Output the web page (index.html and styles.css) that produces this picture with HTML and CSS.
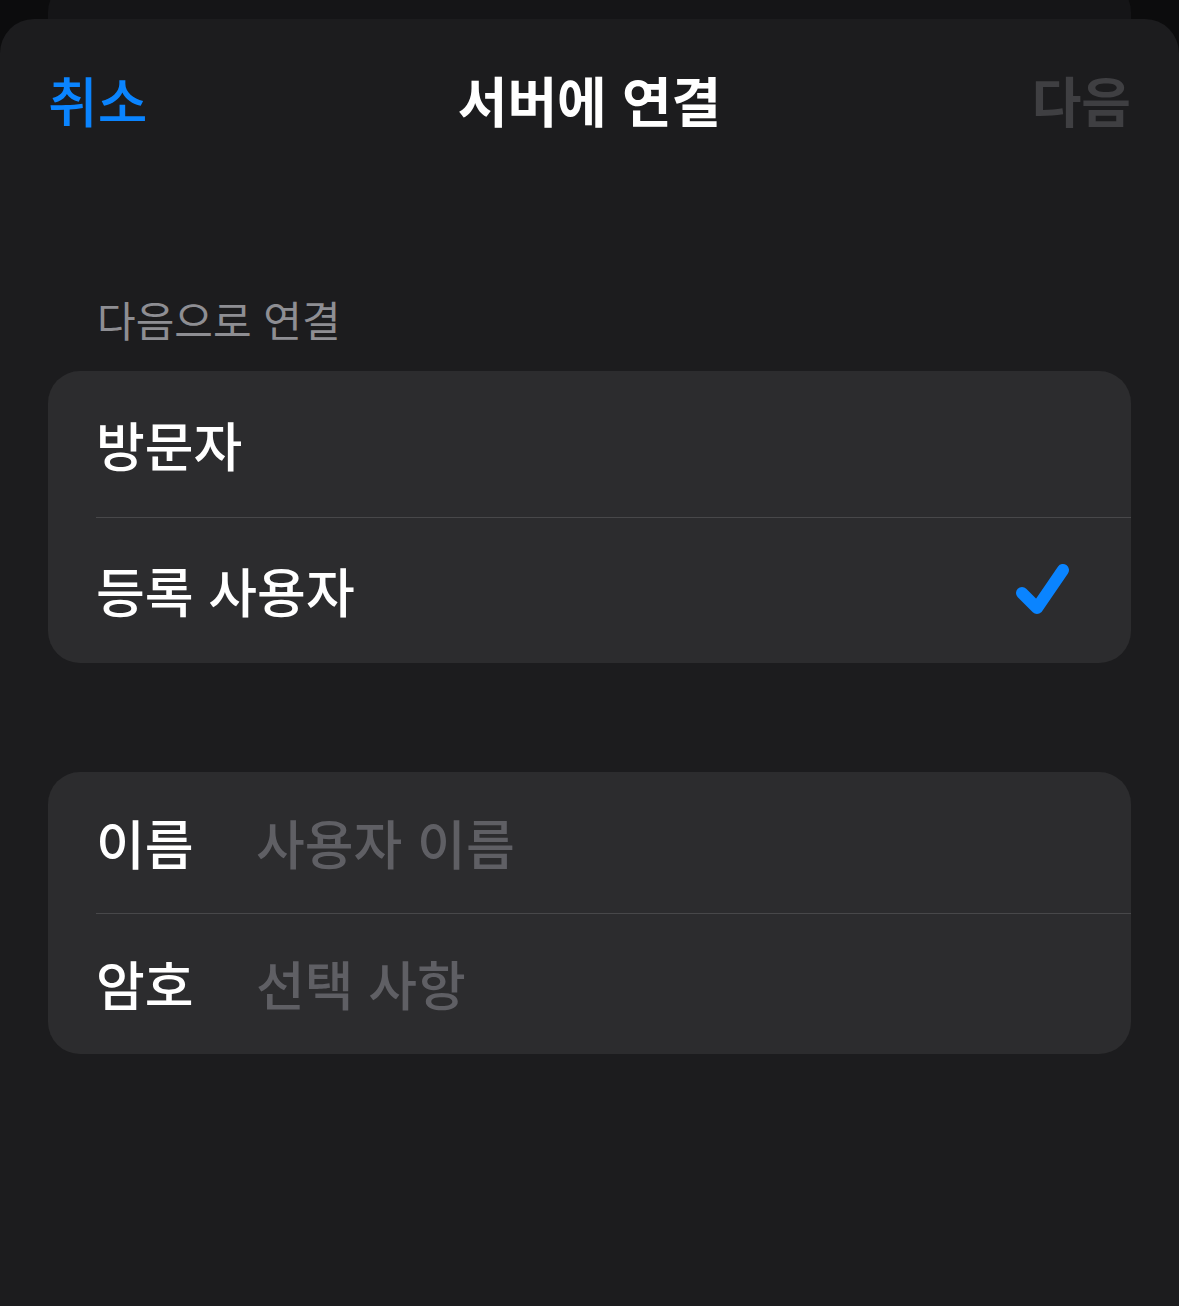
FILE: index.html
```html
<!DOCTYPE html>
<html lang="ko">
<head>
    <meta charset="UTF-8">
    <meta name="viewport" content="width=device-width, initial-scale=1.0">
    <title>서버에 연결</title>
    <link rel="stylesheet" href="styles.css">
</head>
<body>
    <div class="back-sheet"></div>
    <div class="sheet">
        <header class="nav-bar">
            <a href="#" class="nav-cancel">취소</a>
            <h1 class="nav-title">서버에 연결</h1>
            <span class="nav-next">다음</span>
        </header>

        <p class="section-header">다음으로 연결</p>
        <ul class="group">
            <li class="row"><span class="row-label">방문자</span></li>
            <li class="row">
                <span class="row-label">등록 사용자</span>
                <svg class="check" width="56" height="54" viewBox="0 0 56 54">
                    <path d="M7 30 L22 45 L48 7" fill="none" stroke="#0a84ff" stroke-width="12" stroke-linecap="round" stroke-linejoin="round"/>
                </svg>
            </li>
        </ul>

        <ul class="group group-form">
            <li class="row">
                <span class="field-label">이름</span>
                <span class="placeholder">사용자 이름</span>
            </li>
            <li class="row">
                <span class="field-label">암호</span>
                <span class="placeholder">선택 사항</span>
            </li>
        </ul>
    </div>
</body>
</html>
```

FILE: styles.css
```css
:root {
    --fondo: #0c0c0d;
    --hoja: #1c1c1e;
    --hoja-atras: #151517;
    --celda: #2c2c2e;
    --separador: #48484a;
    --azul: #0a84ff;
    --gris: #8e8e93;
    --gris-oscuro: #3f3f42;
    --placeholder: #5f5f64;
    --blanco: #ffffff;
}

* {
    box-sizing: border-box;
}

body {
    margin: 0;
    height: 1306px;
    overflow: hidden;
    background: var(--fondo);
    font-family: "Noto Sans CJK KR", "Noto Sans", sans-serif;
    color: var(--blanco);
}

.back-sheet {
    height: 50px;
    margin: -20px 48px -11px;
    background: var(--hoja-atras);
    border-radius: 32px 32px 0 0;
}

.sheet {
    position: relative;
    height: 1287px;
    background: var(--hoja);
    border-radius: 34px 34px 0 0;
    padding: 0 48px;
}

.nav-bar {
    display: flex;
    align-items: center;
    justify-content: space-between;
    height: 162px;
}

.nav-bar a {
    text-decoration: none;
}

.nav-cancel,
.nav-next,
.nav-title {
    font-size: 54px;
    line-height: 1;
    margin: 0;
}

.nav-cancel {
    color: var(--azul);
    font-weight: 500;
    width: 200px;
}

.nav-title {
    font-weight: 700;
    flex: 1;
    text-align: center;
}

.nav-next {
    color: var(--gris-oscuro);
    font-weight: 700;
    width: 200px;
    text-align: right;
}

.section-header {
    margin: 96px 0 0;
    padding-left: 49px;
    height: 94px;
    font-size: 42px;
    line-height: 84px;
    color: var(--gris);
}

.group {
    list-style: none;
    margin: 0;
    padding: 0;
    background: var(--celda);
    border-radius: 32px;
    overflow: hidden;
}

.row {
    display: flex;
    align-items: center;
    height: 146px;
    padding: 0 60px 0 48px;
    position: relative;
}

.row + .row::before {
    content: "";
    position: absolute;
    top: 0;
    left: 48px;
    right: 0;
    height: 1px;
    background: var(--separador);
}

.row-label,
.field-label,
.placeholder {
    font-size: 53px;
    line-height: 1;
    font-weight: 500;
}

.row-label {
    flex: 1;
}

.check {
    display: block;
}

.group-form {
    margin-top: 109px;
}

.group-form .row {
    height: 141px;
}

.field-label {
    width: 160px;
}

.placeholder {
    color: var(--placeholder);
}
```
